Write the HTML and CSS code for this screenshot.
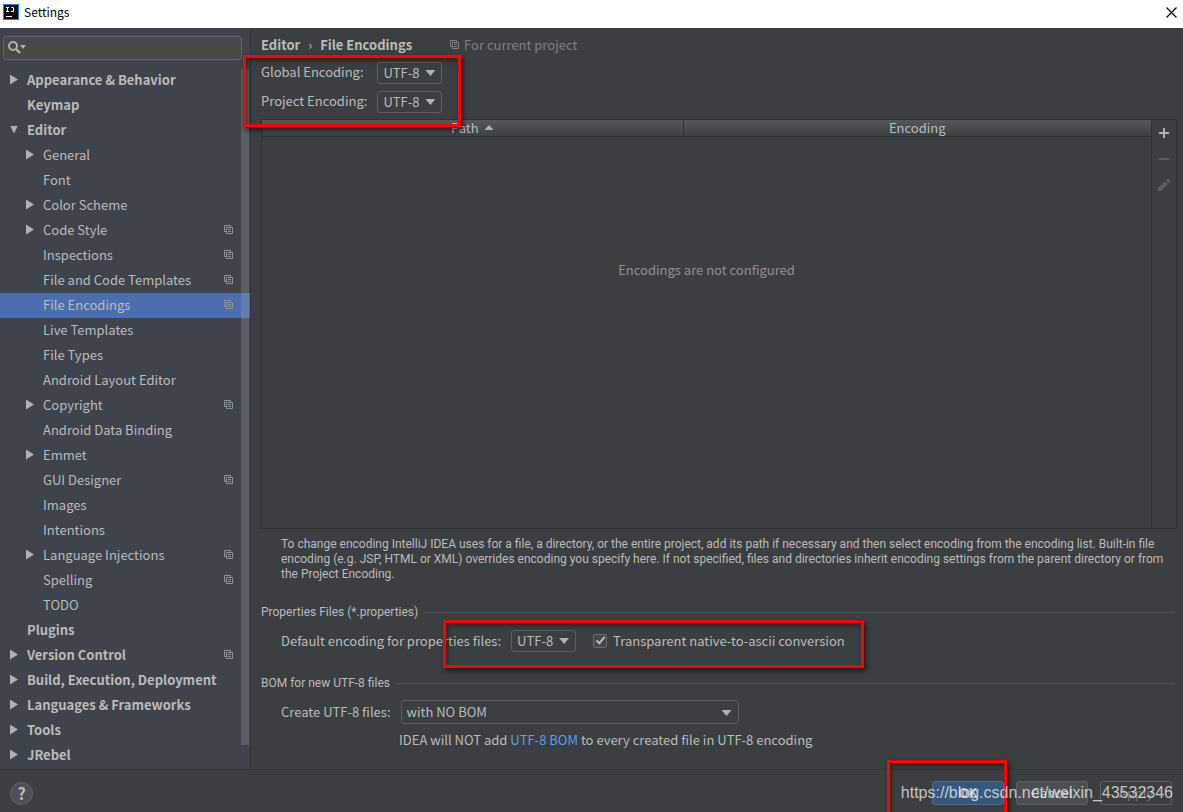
FILE: index.html
```html
<!DOCTYPE html>
<html lang="en">
<head>
<meta charset="UTF-8" />
<meta name="viewport" content="width=device-width, initial-scale=1" />
<title>Settings</title>
<link rel="stylesheet" href="styles.css">
</head>
<body>
  <svg class="defs" aria-hidden="true">
    <symbol id="copy" viewBox="0 0 10 10">
      <path d="M2.5 6.5H.5V.5h6v2M2.5 2.5h6v6h-6zM4 4.5h3M4 6.5h3" fill="none" stroke="currentColor" />
    </symbol>
  </svg>

  <div class="window">
    <header class="titlebar">
      <svg class="app-icon" viewBox="0 0 16 16" aria-hidden="true">
        <rect width="16" height="16" fill="#1a7cf0" />
        <rect x="1" y="1" width="14" height="14" fill="#080808" />
        <path d="M3 3.500h3M3 7.500h3M4.500 3.500v4M8 3.500h2.500v4H8M3 12.500h6" fill="none" stroke="#fff" />
      </svg>
      <h1>Settings</h1>
      <button class="close" aria-label="Close">
        <svg viewBox="0 0 11 11"><path d="M.5.5l10 10M10.500.5l-10 10" stroke="#000" stroke-width="1.200" /></svg>
      </button>
    </header>

    <div class="body">
      <aside class="sidebar">
        <div class="search">
          <svg viewBox="0 0 20 16" aria-hidden="true">
            <circle cx="6" cy="6" r="4" fill="none" stroke="#afb1b3" stroke-width="2" />
            <path d="M9 9l4 4" stroke="#afb1b3" stroke-width="2.400" />
            <path d="M13 5h6l-3 4z" fill="#afb1b3" />
          </svg>
          <input type="text" aria-label="Search settings" />
        </div>
        <ul class="tree">
          <li class="top closed">Appearance &amp; Behavior</li>
          <li class="top">Keymap</li>
          <li class="top open">Editor</li>
          <li class="closed">General</li>
          <li>Font</li>
          <li class="closed">Color Scheme</li>
          <li class="closed">Code Style<svg><use href="#copy" /></svg></li>
          <li>Inspections<svg><use href="#copy" /></svg></li>
          <li>File and Code Templates<svg><use href="#copy" /></svg></li>
          <li class="selected">File Encodings<svg><use href="#copy" /></svg></li>
          <li>Live Templates</li>
          <li>File Types</li>
          <li>Android Layout Editor</li>
          <li class="closed">Copyright<svg><use href="#copy" /></svg></li>
          <li>Android Data Binding</li>
          <li class="closed">Emmet</li>
          <li>GUI Designer<svg><use href="#copy" /></svg></li>
          <li>Images</li>
          <li>Intentions</li>
          <li class="closed">Language Injections<svg><use href="#copy" /></svg></li>
          <li>Spelling<svg><use href="#copy" /></svg></li>
          <li>TODO</li>
          <li class="top">Plugins</li>
          <li class="top closed">Version Control<svg><use href="#copy" /></svg></li>
          <li class="top closed">Build, Execution, Deployment</li>
          <li class="top closed">Languages &amp; Frameworks</li>
          <li class="top closed">Tools</li>
          <li class="top closed">JRebel</li>
        </ul>
        <div class="scrollbar"></div>
      </aside>

      <main>
        <div class="crumbs">
          <b>Editor</b>
          <span class="sep">›</span>
          <b>File Encodings</b>
          <span class="scope"><svg><use href="#copy" /></svg>For current project</span>
        </div>

        <div class="encodings">
          <label for="global">Global Encoding:</label>
          <span class="combo"><select id="global"><option>UTF-8</option></select></span>
          <label for="project">Project Encoding:</label>
          <span class="combo"><select id="project"><option>UTF-8</option></select></span>
        </div>

        <div class="panel">
          <div class="grid">
            <table>
              <thead>
                <tr><th class="path">Path <span class="sort"></span></th><th>Encoding</th></tr>
              </thead>
            </table>
            <p class="empty">Encodings are not configured</p>
          </div>
          <div class="tools">
            <button aria-label="Add"><svg viewBox="0 0 14 14"><path d="M7 2v10M2 7h10" stroke="#afb1b3" stroke-width="2" /></svg></button>
            <button aria-label="Remove" disabled><svg viewBox="0 0 14 14"><path d="M2 7h10" stroke="#5c5e60" stroke-width="2" /></svg></button>
            <button aria-label="Edit" disabled><svg viewBox="0 0 14 14"><path d="M1 13v-3l7-7 3 3-7 7zM9 2l1-1h2l1 1v2l-1 1z" fill="#5c5e60" /></svg></button>
          </div>
        </div>

        <p class="hint">To change encoding IntelliJ IDEA uses for a file, a directory, or the entire project, add its path if necessary and then select encoding from the encoding list. Built-in file encoding (e.g. JSP, HTML or XML) overrides encoding you specify here. If not specified, files and directories inherit encoding settings from the parent directory or from the Project Encoding.</p>

        <section>
          <h2>Properties Files (*.properties)</h2>
          <div class="row">
            <label for="props">Default encoding for properties files:</label>
            <span class="combo"><select id="props"><option>UTF-8</option></select></span>
            <label class="check"><input type="checkbox" checked />Transparent native-to-ascii conversion</label>
          </div>
        </section>

        <section>
          <h2>BOM for new UTF-8 files</h2>
          <div class="row">
            <label for="bom">Create UTF-8 files:</label>
            <span class="combo wide"><select id="bom"><option>with NO BOM</option></select></span>
          </div>
          <p class="note">IDEA will NOT add <a href="#">UTF-8 BOM</a> to every created file in UTF-8 encoding</p>
        </section>

        <div class="mark mark-encodings"></div>
        <div class="mark mark-props"></div>
      </main>
    </div>

    <footer>
      <button class="help" aria-label="Help">?</button>
      <button class="btn primary">OK</button>
      <button class="btn">Cancel</button>
      <button class="btn" disabled>Apply</button>
      <div class="mark mark-ok"></div>
      <span class="watermark">https://blog.csdn.net/weixin_43532346</span>
    </footer>
  </div>
</body>
</html>
```

FILE: styles.css
```css
*, *::before, *::after {
  box-sizing: border-box;
}
body {
  margin: 0;
  font: 13px/20px "Noto Sans CJK SC", "Noto Sans", sans-serif;
  background: #3c3f41;
  color: #bbbbbb;
}
h1, h2, p, ul {
  margin: 0;
  padding: 0;
  font-weight: 400;
}
button, input, select {
  font: inherit;
  color: inherit;
}
button {
  padding: 0;
  border: none;
  background: none;
}
svg {
  display: block;
}
.defs {
  position: absolute;
  width: 0;
  height: 0;
}
.window {
  display: flex;
  flex-direction: column;
  height: 100vh;
  overflow: hidden;
}

/* Title bar */
.titlebar {
  display: flex;
  align-items: center;
  gap: 5px;
  height: 28px;
  padding: 0 6px 4px 3px;
  background: #fff;
  color: #000;
}
.titlebar h1 {
  flex: 1;
  font-size: 12px;
}
.app-icon {
  width: 16px;
  height: 16px;
}
.close svg {
  width: 11px;
  height: 11px;
}
.body {
  flex: 1;
  display: flex;
  min-height: 0;
}

/* Sidebar */
.sidebar {
  position: relative;
  flex: none;
  width: 251px;
  padding-top: 8px;
  background: #3f434c;
  border-right: 1px solid #323232;
}
.search {
  display: flex;
  align-items: center;
  height: 24px;
  margin: 0 8px 8px 3px;
  padding-left: 3px;
  background: #45494a;
  border: 1px solid #646464;
  border-radius: 3px;
}
.search svg {
  width: 20px;
  height: 16px;
}
.search input {
  flex: 1;
  min-width: 0;
  border: none;
  outline: none;
  background: none;
}
.tree {
  list-style: none;
}
.tree li {
  display: flex;
  align-items: center;
  height: 25px;
  padding: 0 16px 2px 26px;
}
.tree li::before {
  content: "";
  width: 8px;
  margin-right: 9px;
}
.tree li.top {
  padding-left: 10px;
  font-weight: 700;
}
.tree li.closed::before {
  height: 10px;
  background: #afb1b3;
  clip-path: polygon(0 0, 100% 50%, 0 100%);
}
.tree li.open::before {
  height: 8px;
  background: #afb1b3;
  clip-path: polygon(0 0, 100% 0, 50% 100%);
}
.tree li.selected {
  background: #4b6eaf;
}
.tree svg {
  width: 10px;
  height: 10px;
  margin-left: auto;
  color: #8b9399;
}
.scrollbar {
  position: absolute;
  top: 41px;
  right: 1px;
  bottom: 24px;
  width: 8px;
  background: rgba(160, 160, 160, 0.3);
}

/* Settings page */
main {
  position: relative;
  flex: 1;
  min-width: 0;
  display: flex;
  flex-direction: column;
  padding: 6px 6px 19px 10px;
}
.crumbs {
  display: flex;
  align-items: center;
  height: 22px;
}
.sep {
  margin: 0 8px;
}
.scope {
  display: flex;
  align-items: center;
  gap: 4px;
  margin-left: 38px;
  color: #808080;
}
.scope svg {
  width: 10px;
  height: 10px;
}
.encodings {
  display: grid;
  grid-template-columns: auto 1fr;
  gap: 7px 10px;
  margin: 6px 0;
}
.combo {
  position: relative;
  width: 65px;
  height: 22px;
}
.combo::after {
  content: "";
  position: absolute;
  top: 8px;
  right: 7px;
  width: 10px;
  height: 6px;
  background: #afb1b3;
  clip-path: polygon(0 0, 100% 0, 50% 100%);
  pointer-events: none;
}
.combo select {
  appearance: none;
  display: block;
  width: 100%;
  height: 100%;
  padding: 0 5px;
  line-height: 20px;
  background: transparent;
  border: 1px solid #5e6060;
  border-radius: 3px;
}
.combo.wide {
  width: 338px;
  height: 24px;
}
.combo.wide::after {
  top: 10px;
}
.panel {
  flex: 1;
  display: flex;
  border: 1px solid #323232;
}
.grid {
  flex: 1;
}
.grid table {
  width: 100%;
  table-layout: fixed;
  border-collapse: collapse;
  background: linear-gradient(#55585a, #3c3e3f);
  border-bottom: 1px solid #323232;
}
.grid th {
  height: 16px;
  padding: 0;
  line-height: 16px;
  font-weight: 400;
}
.grid .path {
  width: 421px;
  border-right: 1px solid #323232;
}
.sort {
  display: inline-block;
  width: 9px;
  height: 5px;
  margin: 0 0 3px 3px;
  background: #afb1b3;
  clip-path: polygon(50% 0, 100% 100%, 0 100%);
}
.empty {
  margin-top: 123px;
  text-align: center;
  color: #919191;
}
.tools {
  display: flex;
  flex-direction: column;
  align-items: center;
  gap: 12px;
  width: 25px;
  padding-top: 6px;
  border-left: 1px solid #323232;
}
.tools svg {
  width: 14px;
  height: 14px;
}
.hint {
  margin: 8px 8px 0 20px;
  font-family: Roboto, "Noto Sans", sans-serif;
  font-size: 12px;
  line-height: 15px;
}
section h2 {
  display: flex;
  align-items: center;
  gap: 6px;
  font-family: Roboto, "Noto Sans", sans-serif;
  font-size: 12px;
}
section h2::after {
  content: "";
  flex: 1;
  height: 1px;
  margin-right: 3px;
  background: #515151;
}
section {
  margin-top: 20px;
}
.row {
  display: flex;
  align-items: center;
  gap: 10px;
  height: 24px;
  margin: 7px 0 0 20px;
}
.check {
  display: flex;
  align-items: center;
  gap: 6px;
  margin-left: 7px;
}
.check input {
  appearance: none;
  position: relative;
  width: 14px;
  height: 14px;
  margin: 0;
  background: #43494a;
  border: 1px solid #6b6b6b;
  border-radius: 2px;
}
.check input:checked::after {
  content: "";
  position: absolute;
  top: 0;
  left: 4px;
  width: 5px;
  height: 9px;
  border: solid #bbb;
  border-width: 0 2px 2px 0;
  transform: rotate(40deg);
}
.note {
  margin: 6px 0 0 138px;
}
.note a {
  color: #589df6;
  text-decoration: none;
}

/* Bottom bar */
footer {
  position: relative;
  display: flex;
  align-items: center;
  gap: 12px;
  height: 43px;
  padding: 4px 11px 0 10px;
  border-top: 1px solid #323232;
}
.help {
  width: 23px;
  height: 23px;
  margin-right: auto;
  border: 1px solid #646464;
  border-radius: 50%;
  background: #4c5052;
  font-size: 16px;
  font-weight: 700;
}
.btn {
  width: 72px;
  height: 24px;
  border: 1px solid #5e6060;
  border-radius: 3px;
  background: #4c5052;
}
.btn.primary {
  background: #365880;
  border-color: #4c708c;
  font-weight: 700;
}
.btn:disabled {
  background: none;
  color: #777;
}

/* Callouts */
.mark {
  position: absolute;
  border: 3px solid #f00;
  box-shadow: 2px 3px 5px rgba(0, 0, 0, 0.6), inset 2px 3px 5px rgba(0, 0, 0, 0.4);
  pointer-events: none;
}
.mark-encodings {
  top: 27px;
  left: -8px;
  width: 218px;
  height: 72px;
}
.mark-props {
  bottom: 101px;
  left: 192px;
  width: 421px;
  height: 48px;
}
.mark-ok {
  top: -10px;
  right: 176px;
  width: 120px;
  height: 64px;
}
.watermark {
  position: absolute;
  right: 10px;
  font: 16px/20px "Liberation Sans", Arial, sans-serif;
  color: rgba(255, 255, 255, 0.7);
}
```
